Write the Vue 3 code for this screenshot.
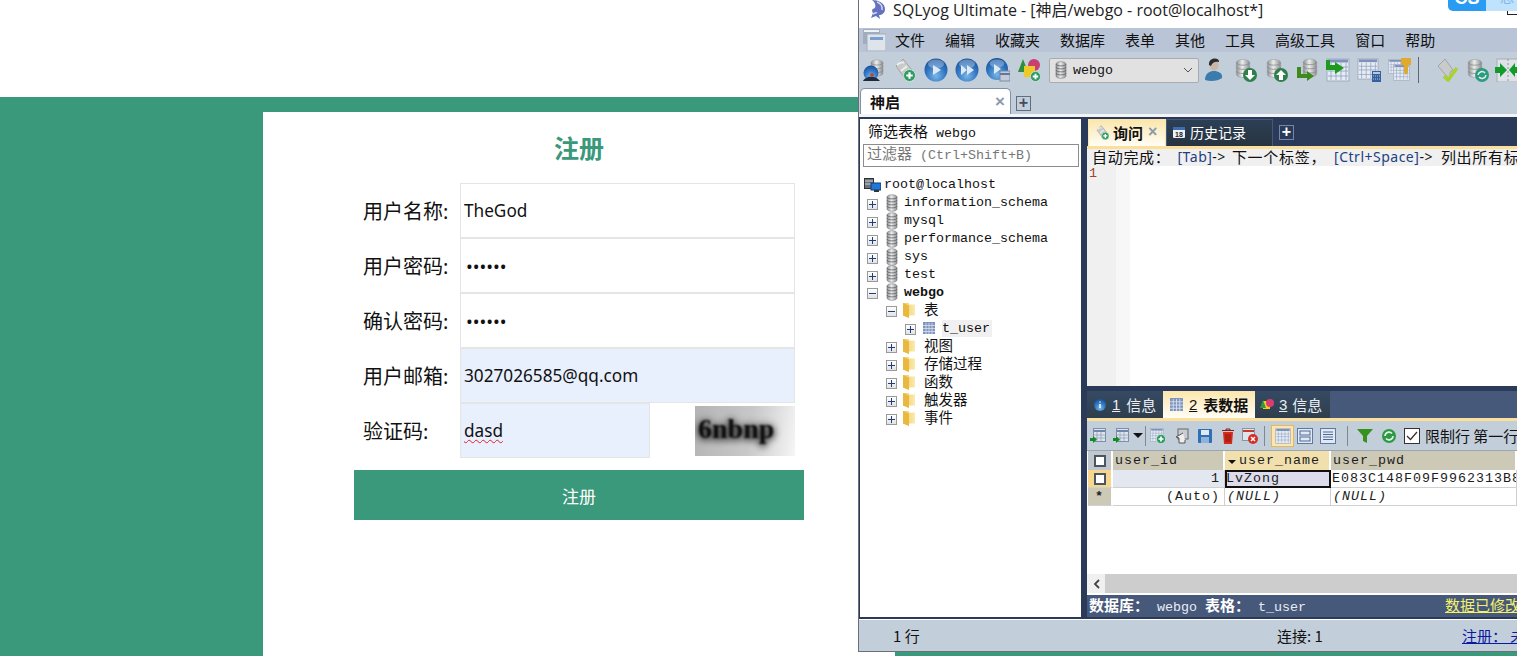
<script setup>
const fields = [
  { label: '用户名称:', type: 'text', value: 'TheGod' },
  { label: '用户密码:', type: 'password', value: '123456' },
  { label: '确认密码:', type: 'password', value: '123456' },
  { label: '用户邮箱:', type: 'text', value: '3027026585@qq.com', filled: true }
]

const menus = ['文件', '编辑', '收藏夹', '数据库', '表单', '其他', '工具', '高级工具', '窗口', '帮助']
const toolsA = ['i-conn', 'i-newq', 'i-play', 'i-playall', 'i-playtab', 'i-shapes']
const toolsB = ['i-user', 'i-dbdown', 'i-dbup', 'i-dbback', 'i-tblback', 'i-tblcalc', 'i-tblkey']
const toolsC = ['i-check', 'i-dbsync', 'i-merge']

const tree = [
  { text: 'root@localhost', level: 0, icon: 'i-server' },
  { text: 'information_schema', level: 1, icon: 'i-db', box: '+' },
  { text: 'mysql', level: 1, icon: 'i-db', box: '+' },
  { text: 'performance_schema', level: 1, icon: 'i-db', box: '+' },
  { text: 'sys', level: 1, icon: 'i-db', box: '+' },
  { text: 'test', level: 1, icon: 'i-db', box: '+' },
  { text: 'webgo', level: 1, icon: 'i-db', box: '-', bold: true },
  { text: '表', level: 2, icon: 'i-folder', box: '-' },
  { text: 't_user', level: 3, icon: 'i-table', box: '+', active: true },
  { text: '视图', level: 2, icon: 'i-folder', box: '+' },
  { text: '存储过程', level: 2, icon: 'i-folder', box: '+' },
  { text: '函数', level: 2, icon: 'i-folder', box: '+' },
  { text: '触发器', level: 2, icon: 'i-folder', box: '+' },
  { text: '事件', level: 2, icon: 'i-folder', box: '+' }
]
</script>

<template>
  <div class="page">
    <svg class="defs" width="0" height="0">
      <defs>
        <linearGradient id="g-db" x1="0" x2="1" y1="0" y2="0">
          <stop offset="0" stop-color="#8d8f90" />
          <stop offset="0.45" stop-color="#eceded" />
          <stop offset="1" stop-color="#8a8c8d" />
        </linearGradient>
        <radialGradient id="g-ball" cx="0.5" cy="0.75" r="0.8">
          <stop offset="0" stop-color="#7ab6e8" />
          <stop offset="0.55" stop-color="#2f74c0" />
          <stop offset="1" stop-color="#174a90" />
        </radialGradient>
        <linearGradient id="g-folder" x1="0" x2="1" y1="0" y2="0">
          <stop offset="0" stop-color="#f1cb62" />
          <stop offset="1" stop-color="#fbeab0" />
        </linearGradient>
        <symbol id="i-cyl" viewBox="0 0 24 24">
          <path d="M4 5c0-5 16-5 16 0v14c0 5-16 5-16 0z" fill="url(#g-db)" stroke="#9a9d9f" stroke-width="0.7" />
          <path d="M4 5c0 4 16 4 16 0M4 10c0 4 16 4 16 0M4 15c0 4 16 4 16 0" fill="none" stroke="#85878a" stroke-width="0.9" />
        </symbol>
        <symbol id="i-db" viewBox="0 0 12 18">
          <path d="M1 3c0-3 10-3 10 0v12c0 3-10 3-10 0z" fill="url(#g-db)" stroke="#77797b" stroke-width="0.6" />
          <path d="M1 3c0 2.500 10 2.500 10 0M1 6c0 2.500 10 2.500 10 0M1 9c0 2.500 10 2.500 10 0M1 12c0 2.500 10 2.500 10 0" fill="none" stroke="#5f6163" stroke-width="0.8" />
        </symbol>
        <symbol id="i-folder" viewBox="0 0 14 18">
          <path d="M1 2l6 0 0 1.500 6 0 0 11-6 0 0 2.500-6-2.500z" fill="url(#g-folder)" />
          <path d="M1 2l6 2.500 0 12.500-6-2.500z" fill="#e8b93e" />
        </symbol>
        <symbol id="i-table" viewBox="0 0 12 12">
          <rect width="12" height="12" fill="#7f95bd" />
          <path d="M0 3.500h12M0 6.500h12M0 9.500h12M3 1v11M6 1v11M9 1v11" stroke="#d9e1ee" stroke-width="0.8" />
        </symbol>
        <symbol id="i-server" viewBox="0 0 17 14">
          <rect x="0.500" y="0.500" width="9" height="10" fill="#6d7278" stroke="#2d3238" />
          <path d="M1 3h8M1 6h8" stroke="#cdd3da" />
          <rect x="7" y="5" width="10" height="7" fill="#1f77d6" stroke="#123a70" />
          <path d="M10 13h5" stroke="#333" stroke-width="2" />
        </symbol>
        <symbol id="i-plusdot" viewBox="0 0 24 24">
          <circle cx="12" cy="12" r="11" fill="#2f9a63" stroke="#d8efe2" stroke-width="1.500" />
          <path d="M12 6v12M6 12h12" stroke="#fff" stroke-width="4" />
        </symbol>
        <symbol id="i-conn" viewBox="0 0 24 24">
          <use href="#i-cyl" x="6" y="0" width="18" height="20" />
          <circle cx="9" cy="15" r="7.500" fill="url(#g-ball)" />
          <path d="M1 23c2-4 10-6 15-2l2 2z" fill="#202a3a" />
          <circle cx="10" cy="17" r="1.800" fill="#c83a2b" />
        </symbol>
        <symbol id="i-newq" viewBox="0 0 24 24">
          <path d="M3 8l7-7 9 11-4 3-2 7z" fill="#c9cbca" stroke="#a3a6a5" />
          <path d="M4 7c3-3 6-3 7-2M8 13l6-5" fill="none" stroke="#eeeeee" stroke-width="1.800" />
          <use href="#i-plusdot" x="10" y="11" width="13" height="13" />
        </symbol>
        <symbol id="i-gloss" viewBox="0 0 24 24">
          <ellipse cx="12" cy="6" rx="8" ry="4.500" fill="#fff" opacity="0.3" />
        </symbol>
        <symbol id="i-play" viewBox="0 0 24 24">
          <circle cx="12" cy="12" r="11.500" fill="url(#g-ball)" />
          <use href="#i-gloss" width="24" height="24" />
          <path d="M9 7l8 5-8 5z" fill="#dfe9f4" />
        </symbol>
        <symbol id="i-playall" viewBox="0 0 24 24">
          <circle cx="12" cy="12" r="11.500" fill="url(#g-ball)" />
          <use href="#i-gloss" width="24" height="24" />
          <path d="M6 7l6 5-6 5zM12 7l7 5-7 5z" fill="#dfe9f4" />
        </symbol>
        <symbol id="i-playtab" viewBox="0 0 24 24">
          <circle cx="11" cy="11" r="11" fill="url(#g-ball)" />
          <use href="#i-gloss" width="22" height="22" />
          <path d="M8 6l7 5-7 5z" fill="#dfe9f4" />
          <rect x="14" y="13" width="10" height="10" fill="#c3cbd8" stroke="#7f8ba0" />
          <path d="M14 16h10" stroke="#5e77a8" stroke-width="2" />
        </symbol>
        <symbol id="i-shapes" viewBox="0 0 24 24">
          <path d="M6 1l5 13H1z" fill="#2f8e3e" />
          <circle cx="17" cy="7" r="6" fill="#c93f72" />
          <rect x="7" y="8" width="11" height="11" fill="#efc92a" />
          <use href="#i-plusdot" x="13" y="13" width="11" height="11" />
        </symbol>
        <symbol id="i-user" viewBox="0 0 24 24">
          <path d="M3 22c0-7 5-9 9-9s9 2 8 7c-4 3-11 4-17 2z" fill="#3a7cab" />
          <ellipse cx="12" cy="7" rx="4.500" ry="5.500" fill="#cbb7a5" />
          <path d="M7 7c-1-8 11-8 10-3-3-1-7 0-8 4z" fill="#2b2d30" />
        </symbol>
        <symbol id="i-dbdown" viewBox="0 0 24 24">
          <use href="#i-cyl" x="0" y="0" width="20" height="21" />
          <circle cx="17" cy="17" r="7" fill="#2f7f4a" />
          <path d="M15 12h4v5h3l-5 5-5-5h3z" fill="#fff" />
        </symbol>
        <symbol id="i-dbup" viewBox="0 0 24 24">
          <use href="#i-cyl" x="0" y="0" width="20" height="21" />
          <circle cx="17" cy="17" r="7" fill="#2f7f4a" />
          <path d="M15 22h4v-5h3l-5-5-5 5h3z" fill="#fff" />
        </symbol>
        <symbol id="i-dbback" viewBox="0 0 24 24">
          <use href="#i-cyl" x="5" y="0" width="20" height="20" />
          <path d="M2 9v11h10v3l7-5-7-5v3H6V9z" fill="#3f8a1e" />
        </symbol>
        <symbol id="i-grid" viewBox="0 0 24 24">
          <rect x="1" y="1" width="22" height="22" fill="#e7ebf2" stroke="#9fabbf" />
          <path d="M2 3h20" stroke="#7e93bb" stroke-width="3" />
          <path d="M5 5v17M10 5v17M15 5v17M20 5v17M2 9h20M2 13h20M2 18h20" stroke="#8ca0c4" stroke-width="0.8" />
        </symbol>
        <symbol id="i-tblback" viewBox="0 0 24 24">
          <use href="#i-grid" width="24" height="24" />
          <path d="M0 2v10h9v4l9-6-9-6v3H4V2z" fill="#1e9a1c" />
        </symbol>
        <symbol id="i-tblcalc" viewBox="0 0 24 24">
          <use href="#i-grid" width="22" height="22" />
          <rect x="15" y="13" width="9" height="11" fill="#35609e" />
          <path d="M16 15h7" stroke="#e7ebf2" stroke-width="1.500" />
          <path d="M16 18h7M16 21h7" stroke="#b7c6e0" stroke-dasharray="1 1" />
        </symbol>
        <symbol id="i-tblkey" viewBox="0 0 24 24">
          <use href="#i-grid" x="0" y="1" width="15" height="15" />
          <use href="#i-grid" x="5" y="6" width="17" height="17" />
          <path d="M13 0h10v7h-3v8l-3 2-1-3v-7h-3z" fill="#e0a92f" />
        </symbol>
        <symbol id="i-check" viewBox="0 0 24 24">
          <path d="M3 8l7-7 8 11-3 2v8z" fill="#c9cbca" stroke="#a3a6a5" />
          <path d="M9 18l4 4 9-12" fill="none" stroke="#a8d22e" stroke-width="3.500" />
        </symbol>
        <symbol id="i-dbsync" viewBox="0 0 24 24">
          <use href="#i-cyl" x="0" y="0" width="20" height="21" />
          <circle cx="17" cy="17" r="7" fill="#2f9a83" />
          <path d="M13 17a4 4 0 0 1 7-2M21 17a4 4 0 0 1-7 2" fill="none" stroke="#d8efe2" stroke-width="1.600" />
        </symbol>
        <symbol id="i-merge" viewBox="0 0 24 24">
          <rect x="2" y="1" width="22" height="23" fill="#dfe3e8" stroke="#a7adb6" />
          <path d="M13 1v23" stroke="#8d949f" stroke-dasharray="2 2" />
          <path d="M0 9h5V5l7 7-7 7v-4H0zM24 9h-4V5l-6 7 6 7v-4h4z" fill="#129a2b" />
        </symbol>
        <symbol id="i-gridin" viewBox="0 0 16 16">
          <rect x="3.500" y="0.500" width="12" height="13" fill="#dfe4ec" stroke="#7e8ea8" />
          <path d="M4 3h11" stroke="#6f86ad" stroke-width="2" />
          <path d="M7 4v9M11 4v9M4 7h11M4 10h11" stroke="#8a9bb8" stroke-width="0.7" />
          <path d="M0 10h3V8l4 3.500L3 15v-2H0z" fill="#138a26" />
        </symbol>
      </defs>
    </svg>

    <header class="top"></header>

    <main class="band">
      <section class="card">
        <h2 class="title">注册</h2>
        <form class="form" @submit.prevent>
          <div v-for="f in fields" :key="f.label" class="row">
            <label class="label">{{ f.label }}</label>
            <input class="input" :class="{ filled: f.filled, pass: f.type === 'password' }" :type="f.type" :value="f.value" />
          </div>
          <div class="row">
            <label class="label">验证码:</label>
            <div class="input filled short"><span class="typo">dasd</span></div>
            <div class="captcha"><span>6nbnp</span></div>
          </div>
          <button class="submit" type="button">注册</button>
        </form>
      </section>
    </main>

    <div class="corner"><b>CS</b><span>恐</span></div>
    <div class="corner-mark"></div>

    <div class="win">
      <div class="titlebar">
        <svg class="dolphin" width="18" height="19" viewBox="0 0 18 19">
          <path d="M3 0c6 0 13 3 13 9 0 4-3 6-6 6l1 4-4-3-5 2 2-5C3 11 2 9 6 8 7 5 6 2 3 0z" fill="#6472c0" />
          <path d="M8 2c3 1 6 4 5 8M4 14c2-1 3-2 4-1" fill="none" stroke="#d5daf2" stroke-width="1.500" />
        </svg>
        <span>SQLyog Ultimate - [神启/webgo - root@localhost*]</span>
      </div>

      <div class="menubar">
        <svg class="mdi" width="23" height="22" viewBox="0 0 23 22">
          <rect x="0" y="0" width="17" height="15" fill="#a1adbd" />
          <rect x="1" y="1" width="15" height="2" fill="#eef1f5" />
          <rect x="4" y="5" width="19" height="17" fill="#dfe4ea" stroke="#a1adbd" />
          <rect x="7" y="8" width="13" height="3" fill="#7aa0d2" />
        </svg>
        <span v-for="m in menus" :key="m">{{ m }}</span>
      </div>

      <div class="toolbar">
        <svg v-for="t in toolsA" :key="t" class="tool"><use :href="'#' + t" /></svg>
        <div class="combo">
          <svg width="12" height="18"><use href="#i-db" /></svg>
          <span>webgo</span>
          <svg class="chev" width="10" height="6" viewBox="0 0 10 6"><path d="M1 1l4 4 4-4" fill="none" stroke="#555" /></svg>
        </div>
        <svg v-for="t in toolsB" :key="t" class="tool"><use :href="'#' + t" /></svg>
        <i class="sep"></i>
        <svg v-for="t in toolsC" :key="t" class="tool tight"><use :href="'#' + t" /></svg>
      </div>

      <div class="conntabs">
        <div class="conntab"><b>神启</b><em>×</em></div>
        <div class="addbtn">+</div>
      </div>

      <div class="workspace">
        <aside class="side">
          <div class="side-title"><span class="zh">筛选表格</span> webgo</div>
          <div class="filter"><span class="zh">过滤器</span> (Ctrl+Shift+B)</div>
          <ul class="tree">
            <li v-for="n in tree" :key="n.text" class="node" :class="'lv' + n.level">
              <i v-if="n.box" class="box">
                <s class="h"></s><s v-if="n.box === '+'" class="v"></s>
              </i>
              <svg class="nicon" :class="n.icon"><use :href="'#' + n.icon" /></svg>
              <span :class="{ bold: n.bold, active: n.active }">{{ n.text }}</span>
            </li>
          </ul>
        </aside>

        <section class="right">
          <div class="qtabs">
            <div class="qtab on">
              <svg width="15" height="15"><use href="#i-newq" /></svg><b>询问</b><em>×</em>
            </div>
            <div class="qtab">
              <svg width="14" height="14" viewBox="0 0 14 14">
                <rect x="1" y="2" width="12" height="11" rx="1" fill="#eef1f5" />
                <rect x="1" y="2" width="12" height="3" fill="#3d6db0" />
                <text x="7" y="12" font-size="7" text-anchor="middle" font-family="Liberation Sans" font-weight="700" fill="#222">18</text>
              </svg>
              <span>历史记录</span>
            </div>
            <div class="addbtn dark">+</div>
          </div>
          <div class="goldline"></div>
          <div class="hint">
            <span class="hz">自动完成：</span>
            <span class="kw m1"><span class="blue">[Tab]</span>-&gt;</span>
            <span class="hz m2">下一个标签，</span>
            <span class="kw m3"><span class="blue">[Ctrl+Space]</span>-&gt;</span>
            <span class="hz m4">列出所有标签</span>
          </div>
          <div class="editor">
            <div class="gutter">1</div>
            <div class="fold"></div>
          </div>

          <div class="rtabs">
            <div class="rtab"><svg width="12" height="12" viewBox="0 0 12 12"><circle cx="6" cy="6" r="6" fill="url(#g-ball)" /><path d="M6 2.500v1M6 5v4" stroke="#fff" stroke-width="1.500" /></svg><u>1</u><span>信息</span></div>
            <div class="rtab on"><svg width="13" height="13"><use href="#i-table" /></svg><u>2</u><b>表数据</b></div>
            <div class="rtab last"><svg width="14" height="13" viewBox="0 0 14 13"><rect x="3" y="3" width="7" height="8" fill="#f4cb1f" /><path d="M3 2l3 8H0z" fill="#2f9a3e" /><circle cx="10" cy="5" r="4" fill="#d93c74" /></svg><u>3</u><span>信息</span></div>
          </div>
          <div class="goldline"></div>
          <div class="gridbar">
            <svg class="mini"><use href="#i-gridin" /></svg>
            <svg class="mini"><use href="#i-gridin" /></svg>
            <i class="tri"></i>
            <i class="sep2 first"></i>
            <svg class="mini" viewBox="0 0 16 16"><use href="#i-grid" width="14" height="14" /><use href="#i-plusdot" x="6" y="6" width="10" height="10" /></svg>
            <svg class="mini" viewBox="0 0 16 16"><rect x="5" y="1" width="10" height="10" fill="#c9ccd2" stroke="#666" /><path d="M10 5L3 9l3 1v5h6v-3" fill="#eee" stroke="#555" /></svg>
            <svg class="mini narrow" viewBox="0 0 14 14"><rect width="14" height="14" rx="1" fill="#2f6fb5" /><rect x="3" y="1" width="8" height="5" fill="#dfe8f3" /><rect x="3" y="8" width="8" height="6" fill="#8fb1da" /></svg>
            <svg class="mini narrow" viewBox="0 0 14 16"><path d="M2 4h10l-1 12H3z" fill="#d42c1c" /><path d="M1 2.500h12M5 2V1h4v1M5 6v8M7 6v8M9 6v8" stroke="#8e180e" fill="none" /></svg>
            <svg class="mini" viewBox="0 0 16 16"><rect x="0.500" y="0.500" width="12" height="12" fill="#dfe3ea" stroke="#8a94a6" /><path d="M1 3h11" stroke="#c43c2e" stroke-width="2" /><circle cx="11" cy="11" r="5" fill="#d22f25" /><path d="M9 9l4 4m0-4l-4 4" stroke="#fff" stroke-width="1.400" /></svg>
            <i class="sep2"></i>
            <div class="viewbtn"><svg class="mini"><use href="#i-grid" /></svg></div>
            <svg class="mini" viewBox="0 0 16 16"><rect x="0.500" y="0.500" width="15" height="15" fill="#e4e8ef" stroke="#5a78a8" /><rect x="3" y="3" width="10" height="4" fill="none" stroke="#4a6a9c" /><rect x="3" y="9" width="10" height="4" fill="none" stroke="#4a6a9c" /></svg>
            <svg class="mini" viewBox="0 0 16 16"><rect x="0.500" y="0.500" width="15" height="15" fill="#e4e8ef" stroke="#5a78a8" /><path d="M3 4h10M3 6.500h10M3 9h10M3 11.500h10" stroke="#4a6a9c" /></svg>
            <i class="sep2 wide"></i>
            <svg class="mini" viewBox="0 0 16 16"><path d="M0 1h16l-6 7v7l-4-2V8z" fill="#35921f" /></svg>
            <svg class="mini narrow" viewBox="0 0 14 14"><circle cx="7" cy="7" r="7" fill="#2c9a42" /><path d="M3 7a4 4 0 0 1 7-2.500M11 7a4 4 0 0 1-7 2.500" fill="none" stroke="#e3f4e6" stroke-width="1.700" /></svg>
            <label class="limit"><i class="cb"><svg width="12" height="10" viewBox="0 0 12 10"><path d="M1 5l3.500 3.500L11 1" fill="none" stroke="#333" stroke-width="1.300" /></svg></i><span>限制行 第一行</span></label>
          </div>
          <div class="grid">
            <div class="hd corner-cell"><i class="sq"></i></div>
            <div class="hd">user_id</div>
            <div class="hd sorted"><i class="tri small"></i>user_name</div>
            <div class="hd">user_pwd</div>

            <div class="rowhead gold"><i class="sq"></i></div>
            <div class="cell num tint">1</div>
            <div class="cell sel">LvZong</div>
            <div class="cell">E083C148F09F9962313B8</div>

            <div class="rowhead">*</div>
            <div class="cell num">(Auto)</div>
            <div class="cell it">(NULL)</div>
            <div class="cell it">(NULL)</div>
          </div>
          <div class="grid-fill"></div>
          <div class="hscroll">
            <div class="arrow"><svg width="7" height="10" viewBox="0 0 7 10"><path d="M6 1L2 5l4 4" fill="none" stroke="#444" stroke-width="1.800" /></svg></div>
          </div>
          <div class="rstatus">
            <span><b>数据库：</b> webgo <b>表格：</b> t_user</span>
            <a>数据已修改</a>
          </div>
        </section>
      </div>

      <div class="statusbar">
        <span class="s1">1 行</span>
        <span class="s2">连接: 1</span>
        <a class="s3">注册： 未</a>
      </div>
    </div>
  </div>
</template>

<style>
html, body {
  margin: 0;
  height: 100%;
  overflow: hidden;
  background: #fff;
}
</style>

<style scoped>
.page {
  position: relative;
  width: 1517px;
  height: 656px;
  overflow: hidden;
  display: flex;
  flex-direction: column;
  font-family: "Noto Sans", "Noto Sans CJK SC", sans-serif;
  background: #fff;
}
.defs { position: absolute; }
.top { height: 97px; flex: none; }
.band {
  flex: 1;
  background: #3a987b;
  padding: 15px 0 0 263px;
  display: flex;
}
.card {
  width: 632px;
  background: #fff;
  display: flex;
  flex-direction: column;
  align-items: center;
}
.title {
  margin: 0;
  height: 71px;
  line-height: 72px;
  font-size: 25px;
  font-weight: 700;
  color: #3a987b;
}
.form { width: 450px; }
.row {
  display: flex;
  align-items: center;
  height: 55px;
  padding-left: 9px;
}
.label {
  width: 97px;
  flex: none;
  font-size: 20px;
  color: #111;
  white-space: nowrap;
}
.input {
  box-sizing: border-box;
  width: 335px;
  height: 55px;
  margin: 0;
  border: 1px solid #e5e5e5;
  outline: none;
  padding: 0 3px;
  background: #fff;
  font: 17.2px "Noto Sans", sans-serif;
  color: #111;
}
.pass { font-size: 18px; padding-left: 5px; }
.filled { background: #e8f0fe; }
.short {
  width: 190px;
  display: flex;
  align-items: center;
}
.typo {
  text-decoration: underline wavy #e0202c 1px;
  text-underline-offset: 2px;
}
.captcha {
  width: 100px;
  height: 50px;
  margin-left: 45px;
  background: linear-gradient(100deg, #b4b4b4 0, #c8c8c8 55%, #f6f6f6 100%);
  display: flex;
  align-items: center;
  overflow: hidden;
}
.captcha span {
  font: 700 28px "Liberation Serif", serif;
  color: #0c0c0c;
  text-shadow: 0 2px 6px #222, 0 0 8px #444;
  filter: blur(0.8px);
  margin: -3px 0 0 3px;
}
.submit {
  display: block;
  width: 450px;
  height: 50px;
  margin: 12px 0 0;
  border: 0;
  background: #3a987b;
  color: #fff;
  font: 17px "Noto Sans CJK SC", sans-serif;
}

.corner {
  position: absolute;
  left: 1448px;
  top: -11px;
  width: 80px;
  height: 22px;
  border-radius: 5px;
  overflow: hidden;
  z-index: 3;
  background: #bfe2fd;
  display: flex;
}
.corner b {
  width: 38px;
  background: #2a9bf2;
  color: #fff;
  font: 700 18px "Liberation Sans", sans-serif;
  line-height: 18px;
  text-align: center;
}
.corner span {
  color: #7db9ea;
  font-size: 14px;
  margin-left: 14px;
  line-height: 16px;
}
.corner-mark {
  position: absolute;
  left: 1507px;
  top: 11px;
  width: 10px;
  height: 3px;
  border: solid #222;
  border-width: 0 0 1px 1px;
  z-index: 3;
}

.win {
  position: absolute;
  left: 858px;
  top: 0;
  width: 659px;
  height: 652px;
  box-sizing: border-box;
  border-left: 1px solid #6b7078;
  border-bottom: 1px solid #6b7078;
  background: #c3cedb;
  display: flex;
  flex-direction: column;
  overflow: hidden;
  font-family: "Noto Sans CJK SC", sans-serif;
  color: #111;
}
.titlebar {
  height: 28px;
  flex: none;
  background: #fff;
  display: flex;
  align-items: flex-start;
  gap: 6px;
  padding-left: 10px;
  font-size: 16px;
  line-height: 20px;
  font-family: "Open Sans", "Noto Sans CJK SC", sans-serif;
  color: #222;
  white-space: nowrap;
}
.menubar {
  height: 24px;
  flex: none;
  background: #b9c5d6;
  display: flex;
  align-items: center;
  gap: 20px;
  padding-left: 4px;
  font-size: 15px;
  line-height: 22px;
  padding-bottom: 1px;
  box-sizing: border-box;
}
.mdi { margin-right: -11px; flex: none; }
.toolbar {
  height: 36px;
  flex: none;
  display: flex;
  align-items: center;
  gap: 7px;
  padding-left: 3px;
  background: #c3cedb;
}
.tool { width: 24px; height: 24px; flex: none; }
.tool.tight { margin-right: -1px; }
.combo {
  box-sizing: border-box;
  width: 150px;
  height: 25px;
  margin: 0 -4px 0 1px;
  border: 1px solid #a9adb3;
  border-radius: 2px;
  background: #e1e1e1;
  display: flex;
  align-items: center;
  gap: 6px;
  padding-left: 5px;
  font: 13.33px "Liberation Mono", monospace;
  flex: none;
}
.chev { margin-left: auto; margin-right: 5px; }
.sep {
  width: 1px;
  height: 26px;
  flex: none;
  background: #5e6772;
  margin: 0 9px 0 -1px;
}
.conntabs {
  height: 29px;
  flex: none;
  box-sizing: border-box;
  display: flex;
  align-items: flex-end;
  gap: 5px;
  padding-left: 1px;
  border-bottom: 3px solid #f2f4f7;
}
.conntab {
  box-sizing: border-box;
  width: 151px;
  height: 26px;
  background: #fff;
  border: 1px solid #8090a8;
  border-bottom: 0;
  border-radius: 5px 5px 0 0;
  display: flex;
  align-items: center;
  justify-content: space-between;
  padding: 0 5px 0 9px;
  font-size: 15px;
}
.conntab em {
  color: #8b99ad;
  font: 700 17px "Liberation Sans", sans-serif;
}
.addbtn {
  box-sizing: border-box;
  width: 15px;
  height: 15px;
  margin-bottom: 3px;
  border: 1px solid #5f6c82;
  background: #c3cedb;
  color: #3f4c63;
  font: 700 16px/12px "Liberation Sans", sans-serif;
  text-align: center;
}
.addbtn.dark {
  background: #2b3a58;
  border-color: #7486a6;
  color: #fff;
  margin: 0 0 0 6px;
  align-self: center;
}
.workspace {
  flex: 1;
  min-height: 0;
  background: #2b3a58;
  display: flex;
  gap: 6px;
  padding: 2px 0 2px 1px;
  border-bottom: 1px solid #fff;
  box-shadow: 0 1px 0 #7d838c;
}
.side {
  width: 221px;
  flex: none;
  background: #fff;
  padding-top: 4px;
  font: 13.33px "Liberation Mono", "Noto Sans CJK SC", monospace;
  box-sizing: border-box;
}
.zh { font-family: "Noto Sans CJK SC", sans-serif; font-size: 15px; line-height: 1; }
.side-title { padding-left: 8px; height: 21px; line-height: 16px; white-space: nowrap; }
.filter {
  box-sizing: border-box;
  height: 23px;
  width: 216px;
  margin-left: 3px;
  border: 1px solid #8d8d8d;
  padding-left: 3px;
  line-height: 20px;
  color: #777;
  white-space: nowrap;
}
.tree {
  list-style: none;
  margin: 9px 0 0;
  padding: 0;
}
.node {
  height: 17.92px;
  line-height: 17px;
  display: flex;
  align-items: center;
  position: relative;
  white-space: nowrap;
}
.lv0 { padding-left: 4px; }
.lv1 { padding-left: 26px; }
.lv2 { padding-left: 42px; font-size: 14.5px; font-family: "Noto Sans CJK SC", sans-serif; }
.lv2 span { margin-top: -3px; }
.lv3 { padding-left: 63px; }
.box {
  position: absolute;
  width: 9px;
  height: 9px;
  top: 5px;
  border: 1px solid #9a9a9a;
  background: linear-gradient(#fff, #e2e2e2);
  box-sizing: content-box;
}
.lv1 .box { left: 7px; }
.lv2 .box { left: 26px; }
.lv3 .box { left: 45px; }
.box s { position: absolute; background: #1d3f80; }
.box .h { left: 1px; right: 1px; top: 4px; height: 1px; }
.box .v { top: 1px; bottom: 1px; left: 4px; width: 1px; }
.nicon { width: 12px; height: 18px; flex: none; margin-right: 6px; }
.i-folder { width: 14px; margin-right: 8px; }
.i-table { height: 12px; margin-right: 7px; }
.i-server { width: 17px; height: 14px; margin-right: 3px; }
.bold { font-weight: 700; }
.active { background: #f0f0f0; padding-right: 2px; }
.right {
  flex: 1;
  min-width: 0;
  display: flex;
  flex-direction: column;
  overflow: hidden;
}
.qtabs {
  height: 27px;
  flex: none;
  display: flex;
  align-items: stretch;
  padding-left: 1px;
}
.qtab {
  width: 107px;
  box-sizing: border-box;
  background: linear-gradient(#2c3f55, #273340);
  border: 1px solid #46597b;
  border-bottom: 0;
  color: #fff;
  font-size: 14px;
  display: flex;
  align-items: center;
  gap: 4px;
  padding: 0 0 2px 5px;
}
.qtab.on {
  width: 78px;
  background: linear-gradient(#fbe6ac, #fffdf6);
  color: #111;
  border-color: #fbe6ac;
  padding-left: 6px;
  gap: 3px;
  font-size: 15px;
}
.qtab.on em {
  margin-left: 2px;
  color: #8b99ad;
  font: 700 16px "Liberation Sans", sans-serif;
}
.goldline { height: 3px; flex: none; background: #fbdf9b; }
.hint {
  height: 17px;
  flex: none;
  box-sizing: border-box;
  background: #f0f0f0;
  padding: 0 0 3px 5px;
  white-space: nowrap;
  display: flex;
  align-items: center;
  font-size: 14px;
}
.hz { font-size: 15px; letter-spacing: 0.7px; flex: none; }
.kw { font: 14px "Noto Sans", sans-serif; flex: none; letter-spacing: 0.5px; }
.m1 { margin-left: 7px; }
.m2 { margin-left: 6px; }
.m3 { margin-left: 8px; }
.m4 { margin-left: 8px; }
.blue { color: #1c3f80; }
.editor {
  height: 220px;
  flex: none;
  background: #fff;
  display: flex;
}
.gutter {
  width: 29px;
  background: #f0f0f0;
  padding-left: 2px;
  box-sizing: border-box;
  color: #a4402a;
  font: 13.33px/16px "Liberation Mono", monospace;
}
.fold {
  width: 14px;
  background: #f7f7f7;
}
.rtabs {
  height: 27px;
  flex: none;
  margin-top: 5px;
  display: flex;
  background: #46597b;
}
.rtab {
  width: 76px;
  box-sizing: border-box;
  background: linear-gradient(#354a63, #2f3e4c);
  color: #e9edf3;
  font-size: 15px;
  display: flex;
  align-items: center;
  gap: 4px;
  padding-left: 7px;
}
.rtab.on {
  width: 92px;
  background: linear-gradient(#fbe6ac, #fffdf6);
  color: #111;
}
.rtab.last { width: 75px; padding-left: 5px; gap: 3px; }
.rtab u { font: 15px "Liberation Sans", sans-serif; margin: 0 2px 0 2px; }
.gridbar {
  height: 29px;
  flex: none;
  background: #c3cedb;
  display: flex;
  align-items: center;
  gap: 7px;
  padding-left: 3px;
}
.mini { width: 16px; height: 16px; flex: none; }
.narrow { width: 14px; margin-left: 2px; }
.tri {
  width: 0;
  height: 0;
  flex: none;
  border: 5px solid transparent;
  border-top: 5px solid #111;
  border-bottom: 0;
  margin: 0 -2px 0 -3px;
}
.sep2 {
  width: 1px;
  height: 20px;
  flex: none;
  background: #7f8793;
  margin: 0 -1px;
}
.sep2.first { margin: 0 -3px; }
.sep2.wide { margin: 0 2px 0 4px; }
.viewbtn {
  box-sizing: border-box;
  width: 23px;
  height: 22px;
  flex: none;
  margin-right: -4px;
  border: 1px solid #e4b85c;
  background: #fbe6ac;
  display: flex;
  align-items: center;
  justify-content: center;
}
.limit {
  display: flex;
  align-items: center;
  gap: 5px;
  font-size: 15px;
  white-space: nowrap;
  margin-left: 1px;
  flex: none;
}
.cb {
  box-sizing: border-box;
  width: 16px;
  height: 16px;
  border: 1px solid #333;
  background: #fff;
  display: flex;
  align-items: center;
  justify-content: center;
}
.grid {
  flex: none;
  background: #fff;
  display: grid;
  grid-template-columns: 25px 112px 106px 1fr;
  grid-template-rows: 19px 18px 18px;
  font: 13.33px/17px "Liberation Mono", monospace;
  letter-spacing: 1px;
  color: #1c1c1c;
  white-space: nowrap;
  border-top: 1px solid #9aa6b4;
  padding-left: 1px;
}
.hd {
  background: #cdc9b7;
  border-right: 2px solid #fff;
  padding-left: 2px;
  display: flex;
  align-items: center;
}
.sorted { gap: 3px; padding-left: 3px; background: #f1e0ad; }
.tri.small { border-width: 4px; border-top-width: 4px; margin: 3px 0 0 0; border-bottom: 0; }
.corner-cell { justify-content: center; padding: 0; background: #c1c7cd; }
.rowhead {
  background: #cdc9b7;
  border-right: 2px solid #fff;
  border-bottom: 1px solid #d0d0d0;
  display: flex;
  align-items: center;
  justify-content: center;
  font-weight: 700;
}
.rowhead.gold { background: #f6d78d; }
.sq {
  box-sizing: border-box;
  width: 12px;
  height: 12px;
  border: 2px solid #4b5663;
  background: #fff;
}
.cell {
  border-right: 1px solid #d0d0d0;
  border-bottom: 1px solid #d0d0d0;
  padding: 0 2px 0 1px;
  overflow: hidden;
  box-sizing: border-box;
}
.num { text-align: right; padding-right: 4px; }
.tint { background: #e3e7ef; }
.sel { background: #dcdcea; outline: 2px solid #111; outline-offset: -2px; }
.it { font-style: italic; padding-left: 2px; }
.grid-fill { flex: 1; min-height: 0; background: #fff; }
.hscroll {
  height: 21px;
  flex: none;
  box-sizing: border-box;
  background: #cdcdcd;
  border-bottom: 2px solid #fff;
}
.arrow {
  width: 18px;
  height: 19px;
  background: #f0f0f0;
  display: flex;
  align-items: center;
  justify-content: center;
}
.rstatus {
  height: 22px;
  flex: none;
  box-sizing: border-box;
  background: #46597b;
  display: flex;
  align-items: center;
  color: #e9edf3;
  padding: 0 0 3px 2px;
  font: 13.33px "Liberation Mono", "Noto Sans CJK SC", monospace;
  white-space: nowrap;
}
.rstatus b { font: 700 15px "Noto Sans CJK SC", sans-serif; color: #fff; }
.rstatus a {
  color: #f6f16a;
  text-decoration: underline;
  font: 15px "Noto Sans CJK SC", sans-serif;
  flex: none;
  margin-left: 139px;
}
.statusbar {
  height: 31px;
  flex: none;
  background: #c3cedb;
  font-size: 15px;
  display: flex;
  align-items: center;
  white-space: nowrap;
}
.s1 { width: 418px; padding-left: 34px; box-sizing: border-box; flex: none; }
.s2 { width: 185px; box-sizing: border-box; flex: none; }
.s3 { color: #0a1aa0; text-decoration: underline; flex: none; }
</style>
